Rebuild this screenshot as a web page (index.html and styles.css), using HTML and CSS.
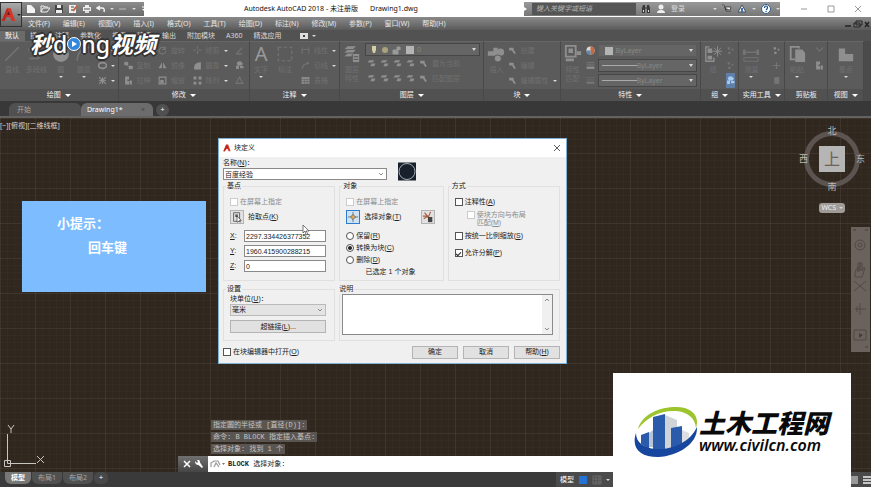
FILE: index.html
```html
<!DOCTYPE html>
<html lang="zh-CN">
<head>
  <meta charset="UTF-8">
  <meta name="viewport" content="width=device-width, initial-scale=1.0">
  <title>Autodesk AutoCAD 2018</title>
  <link rel="stylesheet" href="styles.css">
</head>
<body>
  <!-- shared icons -->
  <svg class="sprite" aria-hidden="true">
    <symbol id="i-line" viewBox="0 0 16 16"><path d="M2 14L14 2" stroke="currentColor" stroke-width="1.2"/></symbol>
    <symbol id="i-poly" viewBox="0 0 16 16"><path d="M1 4h8l5 4-4 4H2" fill="none" stroke="currentColor" stroke-width="1.4"/></symbol>
    <symbol id="i-circle" viewBox="0 0 16 16"><circle cx="8" cy="8" r="7" fill="currentColor"/></symbol>
    <symbol id="i-arc" viewBox="0 0 16 16"><path d="M2 14C2 7 6 3 13 2" fill="none" stroke="currentColor" stroke-width="1.3"/></symbol>
    <symbol id="i-rect" viewBox="0 0 16 16"><path d="M2 4h12v9H2z" fill="none" stroke="currentColor" stroke-width="2"/></symbol>
    <symbol id="i-ellipse" viewBox="0 0 16 16"><ellipse cx="8" cy="8" rx="7" ry="5" fill="none" stroke="currentColor" stroke-width="3"/></symbol>
    <symbol id="i-hatch" viewBox="0 0 16 16"><path d="M2 2l12 12M14 2L2 14M8 2v12M2 8h12" stroke="currentColor" stroke-width="2"/></symbol>
    <symbol id="i-move" viewBox="0 0 16 16"><path d="M8 1v14M1 8h14M5 4l3-3 3 3M5 12l3 3 3-3" fill="none" stroke="currentColor" stroke-width="2"/></symbol>
    <symbol id="i-copy" viewBox="0 0 16 16"><path d="M1 2h6v5H1zM9 9h6v5H9zM4 7l6 4" fill="currentColor" stroke="currentColor"/></symbol>
    <symbol id="i-stretch" viewBox="0 0 16 16"><path d="M2 1h7v5h-3v3h3v6H2zM10 8h4v7h-4z" fill="currentColor"/></symbol>
    <symbol id="i-rotate" viewBox="0 0 16 16"><path d="M13 5a6 6 0 1 0 1 4M13 1v5H8" fill="none" stroke="currentColor" stroke-width="2"/></symbol>
    <symbol id="i-mirror" viewBox="0 0 16 16"><path d="M7 2v11H1zM9 2v11h6z" fill="currentColor"/></symbol>
    <symbol id="i-scale" viewBox="0 0 16 16"><path d="M2 2h12v12H2z" fill="none" stroke="currentColor" stroke-width="2"/><path d="M4 7h6v6H4z" fill="currentColor"/></symbol>
    <symbol id="i-trim" viewBox="0 0 16 16"><path d="M1 7h5M9 7h6M8 1v4M8 9v5" stroke="currentColor" stroke-width="2"/></symbol>
    <symbol id="i-fillet" viewBox="0 0 16 16"><path d="M2 15V10Q3 2 14 2V15z" fill="currentColor"/></symbol>
    <symbol id="i-array" viewBox="0 0 16 16"><path d="M1 1h5v5H1zM10 1h5v5h-5zM1 10h5v5H1zM10 10h5v5h-5z" fill="currentColor"/></symbol>
    <symbol id="i-erase" viewBox="0 0 16 16"><path d="M3 13L13 3M2 14h11" stroke="currentColor" stroke-width="2"/></symbol>
    <symbol id="i-cubes" viewBox="0 0 16 16"><path d="M5 1h6l3 4-2 3H6L3 5zM2 8h5v6H2zM9 9h6v4H9z" fill="currentColor"/></symbol>
    <symbol id="i-tri" viewBox="0 0 16 16"><path d="M8 2l6 11H2z" fill="none" stroke="currentColor" stroke-width="2"/></symbol>
    <symbol id="i-dim" viewBox="0 0 16 16"><path d="M2 2v12M14 2v12M2 6h12" fill="none" stroke="currentColor" stroke-width="1.5"/></symbol>
    <symbol id="i-dash" viewBox="0 0 16 16"><path d="M2 2h12v12H2z" fill="none" stroke="currentColor" stroke-dasharray="3 2"/></symbol>
    <symbol id="i-leader" viewBox="0 0 16 16"><path d="M2 14C3 8 5 5 14 4" fill="none" stroke="currentColor" stroke-width="2"/><path d="M10 1l5 3-4 3z" fill="currentColor"/></symbol>
    <symbol id="i-table" viewBox="0 0 16 16"><path d="M1 2h14v12H1z" fill="currentColor"/><path d="M1 6h14M1 10h14M6 6v8M11 6v8" stroke="#5a5a5a"/></symbol>
    <symbol id="i-layers" viewBox="0 0 20 20"><path d="M5 1h10l-4 4H1zM5 5h10l-4 4H1zM5 9h7l-3 4H1z" fill="currentColor" stroke="#555" stroke-width=".6"/><path d="M11 10h7v9h-7z" fill="currentColor"/><path d="M12 13h5M12 16h5" stroke="#555"/></symbol>
    <symbol id="i-layer" viewBox="0 0 16 16"><path d="M4 2h9l-3 4H1z" fill="currentColor"/><path d="M8 8h7l-2 5H6z" fill="currentColor"/></symbol>
    <symbol id="i-insert" viewBox="0 0 20 20"><path d="M1 7h6V3h5v9H1z" fill="currentColor"/><circle cx="15" cy="8" r="4" fill="currentColor"/><circle cx="12" cy="15" r="4" fill="currentColor" stroke="#595959"/></symbol>
    <symbol id="i-edit" viewBox="0 0 16 16"><path d="M2 3h8v3l4 7-3 1-4-6H2z" fill="currentColor"/></symbol>
    <symbol id="i-match" viewBox="0 0 20 20"><path d="M2 1h11v12H2z" fill="none" stroke="currentColor" stroke-width="2"/><path d="M5 4h5v5H5zM2 15h9v3H2zM14 7h5v4h-5z" fill="currentColor"/></symbol>
    <symbol id="i-lines" viewBox="0 0 16 16"><path d="M1 3h14M1 7h14" stroke="currentColor"/><path d="M1 12h14" stroke="currentColor" stroke-width="4"/></symbol>
    <symbol id="i-group" viewBox="0 0 20 20"><path d="M6 2H2v16h9v-4" fill="none" stroke="currentColor" stroke-width="1.5"/><path d="M4 4h5v5H4zM4 12h5v4H4z" fill="currentColor"/><path d="M15 1v12M9 7h11M11 3l8 8M19 3l-8 8" stroke="currentColor"/></symbol>
    <symbol id="i-dots" viewBox="0 0 16 16"><path d="M3 2h4v4H3zM10 5h3v3h-3zM4 10h4v4H4z" fill="currentColor"/></symbol>
    <symbol id="i-measure" viewBox="0 0 20 20"><path d="M1 8h18" stroke="currentColor" stroke-width="1.500"/><path d="M1 5h3v6H1zM16 5h3v6h-3z" fill="currentColor"/><path d="M2 14h16v4H2z" fill="none" stroke="currentColor"/></symbol>
    <symbol id="i-plus" viewBox="0 0 16 16"><path d="M8 2v12M2 8h12" stroke="currentColor" stroke-width="2"/></symbol>
    <symbol id="i-calc" viewBox="0 0 16 16"><path d="M4 2h9v12H4z" fill="currentColor"/></symbol>
    <symbol id="i-paste" viewBox="0 0 20 20"><path d="M12 4V2H3v14h5" fill="none" stroke="currentColor" stroke-width="2"/><path d="M8 5h8l3 4v10H8z" fill="currentColor"/></symbol>
    <symbol id="i-cut" viewBox="0 0 16 16"><path d="M2 3l6 6 6-6" fill="none" stroke="currentColor" stroke-width="2"/></symbol>
    <symbol id="i-base" viewBox="0 0 20 20"><path d="M2 4h7v6h9v8H2z" fill="currentColor"/></symbol>
    <symbol id="i-acad" viewBox="0 0 20 20"><path d="M1 18L8 1h5l6 17h-5l-2-5H7l-2 5z" fill="#d3372a"/><path d="M8 10l2-5 2 5z" fill="#6f1712"/><path d="M1 18L8 1l2 4-5 13z" fill="#b92c22"/></symbol>
  </svg>

  <header class="titlebar">
    <div class="quick">
      <svg viewBox="0 0 10 10"><path d="M1 1h4l4 4v4H1z" fill="#f4f4f4"/></svg>
      <svg viewBox="0 0 10 10"><path d="M1 8V2h3l1 1h3M1 8l2-4h7L7 8z" fill="none" stroke="#eee"/></svg>
      <svg viewBox="0 0 10 10"><path d="M1 1h8v8H1z" fill="#444"/><path d="M3 1h4v3H3zM2 6h6v3H2z" fill="#eee"/></svg>
      <svg viewBox="0 0 10 10"><path d="M1 1h7v8H1z" fill="#eee"/><path d="M3 3h3M3 6h3" stroke="#444"/><path d="M5 7l4-5" stroke="#c76235" stroke-width="2"/></svg>
      <svg viewBox="0 0 10 10"><path d="M3 1h4v2h2v4H1V3h2z" fill="#eee"/><path d="M2 5h6" stroke="#555"/><path d="M3 7h4v2H3z" fill="#ddd"/></svg>
      <svg viewBox="0 0 10 10"><path d="M4 2L1 4l3 2M1 4h5q3 0 2 4" fill="none" stroke="#f4f4f4" stroke-width="1.4"/></svg>
      <i class="caret"></i>
      <svg viewBox="0 0 10 10"><path d="M1 5h7" stroke="#aaa" stroke-width="1.4"/></svg>
      <i class="caret"></i>
      <svg viewBox="0 0 10 10"><path d="M2 3h6" stroke="#fff"/><path d="M2 5h6L5 8z" fill="#fff"/></svg>
    </div>
    <h1 class="title"><span>Autodesk AutoCAD 2018 - 未注册版</span><span>Drawing1.dwg</span></h1>
    <div class="infocenter">
      <i class="arrow-right"></i>
      <input type="text" class="search" placeholder="键入关键字或短语" aria-label="搜索">
      <svg viewBox="0 0 10 10"><path d="M1 9V4l1-3h2v8zM6 9V1h2l1 3v5z" fill="#3a3a3a"/><path d="M4 4h2" stroke="#333"/><path d="M2 6h1v2H2zM7 6h1v2H7z" fill="#ddd"/></svg>
      <svg viewBox="0 0 10 10"><circle cx="5" cy="3" r="2.5" fill="#eee"/><path d="M1 9q0-3 4-3t4 3z" fill="#eee"/></svg>
      <a href="#" class="signin">登录</a>
      <i class="caret"></i>
      <svg viewBox="0 0 10 10"><path d="M0 1h2l2 6h5M3 3h6L8 6H4z" fill="#eee" stroke="#333" stroke-width=".8"/></svg>
      <svg viewBox="0 0 10 10"><path d="M5 1L1 8h8z" fill="#eee" stroke="#456" /><path d="M5 4v4" stroke="#3d74b0" stroke-width="2"/></svg>
      <i class="caret"></i>
      <svg class="help" viewBox="0 0 10 10"><circle cx="5" cy="5" r="4.5" fill="#fff" stroke="#2e6297"/><path d="M3.5 4q0-2 1.5-2t1.5 1.5T5 6M5 7v1" fill="none" stroke="#1c4c85" stroke-width="1.2"/></svg>
      <i class="caret"></i>
    </div>
    <div class="wincontrols">
      <svg viewBox="0 0 8 8"><path d="M1 4h6" stroke="#999"/></svg>
      <svg viewBox="0 0 8 8"><path d="M1 1h6v6H1z" fill="none" stroke="#999"/></svg>
      <svg viewBox="0 0 8 8"><path d="M1 1l6 6M7 1L1 7" stroke="#999"/></svg>
    </div>
  </header>

  <button class="appbutton" aria-label="应用程序菜单"><svg><use href="#i-acad"/></svg><i class="caret dark"></i></button>

  <nav class="menubar">
    <a href="#">文件(F)</a>
    <a href="#">编辑(E)</a>
    <a href="#">视图(V)</a>
    <a href="#">插入(I)</a>
    <a href="#">格式(O)</a>
    <a href="#">工具(T)</a>
    <a href="#">绘图(D)</a>
    <a href="#">标注(N)</a>
    <a href="#">修改(M)</a>
    <a href="#">参数(P)</a>
    <a href="#">窗口(W)</a>
    <a href="#">帮助(H)</a>
    <svg viewBox="0 0 26 8"><path d="M1 6h6" stroke="#222" stroke-width="1.5"/><path d="M12 1h6v4h-6zM10 3h6v4h-6z" fill="#777" stroke="#222"/><path d="M21 2l4 5M25 2l-4 5" stroke="#222" stroke-width="1.5"/></svg>
  </nav>

  <nav class="tabs">
    <a class="active" href="#">默认</a>
    <a href="#">插入</a>
    <a href="#">注释</a>
    <a href="#">参数化</a>
    <a href="#">视图</a>
    <a href="#">管理</a>
    <a href="#">输出</a>
    <a href="#">附加模块</a>
    <a href="#">A360</a>
    <a href="#">精选应用</a>
    <svg viewBox="0 0 8 6"><path d="M0 0h8v6H0z" fill="#ddd"/><path d="M3 2h2v2H3z" fill="#444"/></svg>
    <i class="caret"></i>
  </nav>

  <main class="ribbon">
    <section class="panel p-draw">
      <div class="tools">
        <button class="big"><svg><use href="#i-line"/></svg>直线</button>
        <button class="big"><svg><use href="#i-poly"/></svg>多段线</button>
        <button class="big"><svg class="lit"><use href="#i-circle"/></svg>圆<i class="caret"></i></button>
        <button class="big"><svg><use href="#i-arc"/></svg>圆弧<i class="caret"></i></button>
        <div class="col">
          <button aria-label="矩形"><svg><use href="#i-rect"/></svg><i class="caret"></i></button>
          <button aria-label="椭圆"><svg class="lit"><use href="#i-ellipse"/></svg><i class="caret"></i></button>
          <button aria-label="图案填充"><svg class="lit"><use href="#i-hatch"/></svg><i class="caret"></i></button>
        </div>
      </div>
      <h2>绘图<i class="caret wide"></i></h2>
    </section>
    <section class="panel p-modify">
      <div class="tools">
        <div class="col">
          <button><svg><use href="#i-move"/></svg>移动</button>
          <button><svg class="lit"><use href="#i-copy"/></svg>复制</button>
          <button><svg class="lit"><use href="#i-stretch"/></svg>拉伸</button>
        </div>
        <div class="col">
          <button><svg><use href="#i-rotate"/></svg>旋转</button>
          <button><svg class="lit"><use href="#i-mirror"/></svg>镜像</button>
          <button><svg class="lit"><use href="#i-scale"/></svg>缩放</button>
        </div>
        <div class="col">
          <button><svg><use href="#i-trim"/></svg>修剪<i class="caret"></i></button>
          <button><svg class="lit"><use href="#i-fillet"/></svg>圆角<i class="caret"></i></button>
          <button><svg class="lit"><use href="#i-array"/></svg>阵列<i class="caret"></i></button>
        </div>
        <div class="col">
          <button aria-label="删除"><svg><use href="#i-erase"/></svg></button>
          <button aria-label="分解"><svg class="lit"><use href="#i-cubes"/></svg></button>
          <button aria-label="偏移"><svg><use href="#i-tri"/></svg></button>
        </div>
      </div>
      <h2>修改<i class="caret wide"></i></h2>
    </section>
    <section class="panel p-note">
      <div class="tools">
        <button class="big"><span class="letter">A</span>文字<i class="caret"></i></button>
        <button class="big"><svg><use href="#i-dash"/></svg>标注</button>
        <div class="col">
          <button><svg><use href="#i-dim"/></svg>线性<i class="caret"></i></button>
          <button><svg><use href="#i-leader"/></svg>引线<i class="caret"></i></button>
          <button><svg class="lit"><use href="#i-table"/></svg>表格</button>
        </div>
      </div>
      <h2>注释<i class="caret wide"></i></h2>
    </section>
    <section class="panel p-layer">
      <div class="tools">
        <button class="big"><svg class="lit"><use href="#i-layers"/></svg>图层<br>特性</button>
        <div class="col grow">
          <div class="combo">
            <svg viewBox="0 0 34 10"><path d="M3 1h4v4l-1 3H4L3 5z" fill="#d5cfa4"/><circle cx="16" cy="5" r="3" fill="#aaa27b"/><path d="M24 5h5v4h-5zM28 5V2h3v3" fill="#999" stroke="#999"/></svg>
            <span class="swatch"></span>
            <select aria-label="图层"><option>0</option></select>
          </div>
          <div class="iconrow">
            <svg class="lit"><use href="#i-layer"/></svg>
            <svg class="lit"><use href="#i-layer"/></svg>
            <svg class="lit"><use href="#i-layer"/></svg>
            <svg class="lit"><use href="#i-layer"/></svg>
            <svg class="lit"><use href="#i-edit"/></svg>
            <span>置为当前</span>
          </div>
          <div class="iconrow">
            <svg class="lit"><use href="#i-layer"/></svg>
            <svg class="lit"><use href="#i-layer"/></svg>
            <svg class="lit"><use href="#i-layer"/></svg>
            <svg class="lit"><use href="#i-layer"/></svg>
            <svg class="lit"><use href="#i-edit"/></svg>
            <span>匹配图层</span>
          </div>
        </div>
      </div>
      <h2>图层<i class="caret wide"></i></h2>
    </section>
    <section class="panel p-block">
      <div class="tools">
        <button class="big"><svg class="lit"><use href="#i-insert"/></svg>插入</button>
        <div class="col">
          <button><svg class="lit"><use href="#i-edit"/></svg>创建</button>
          <button><svg class="lit"><use href="#i-edit"/></svg>编辑</button>
          <button><svg class="lit"><use href="#i-edit"/></svg>编辑属性<i class="caret"></i></button>
        </div>
      </div>
      <h2>块<i class="caret wide"></i></h2>
    </section>
    <section class="panel p-props">
      <div class="tools">
        <button class="big"><svg class="lit"><use href="#i-match"/></svg>特性<br>匹配</button>
        <div class="col grow">
          <div class="prop">
            <svg viewBox="0 0 10 10"><circle cx="5" cy="5" r="4.500" fill="#d8d8d8"/><path d="M5 .5A4.500 4.500 0 0 1 5 9.500z" fill="#c9683f"/><path d="M5 5v4.500A4.500 4.500 0 0 1 .5 5z" fill="#5c88ad"/></svg>
            <div class="combo flat"><span class="swatch"></span><select aria-label="颜色"><option>ByLayer</option></select></div>
          </div>
          <div class="prop">
            <svg class="lit"><use href="#i-lines"/></svg>
            <div class="combo"><span class="stroke"></span><select aria-label="线宽"><option>ByLayer</option></select></div>
          </div>
          <div class="prop">
            <svg><use href="#i-lines"/></svg>
            <div class="combo"><span class="stroke"></span><select aria-label="线型"><option>ByLayer</option></select></div>
          </div>
        </div>
      </div>
      <h2>特性<i class="caret wide"></i></h2>
    </section>
    <section class="panel p-group">
      <div class="tools">
        <button class="big"><svg class="lit"><use href="#i-group"/></svg>组</button>
        <div class="col">
          <button aria-label="解除编组"><svg><use href="#i-dots"/></svg></button>
          <button aria-label="组编辑"><svg><use href="#i-dots"/></svg></button>
          <button class="on" aria-label="启用组选择"><svg><use href="#i-cubes"/></svg></button>
        </div>
      </div>
      <h2>组<i class="caret wide"></i></h2>
    </section>
    <section class="panel p-utils">
      <div class="tools">
        <button class="big"><svg><use href="#i-measure"/></svg>测量<i class="caret"></i></button>
        <div class="col">
          <button aria-label="快速选择"><svg class="lit"><use href="#i-dots"/></svg></button>
          <button aria-label="点坐标"><svg><use href="#i-plus"/></svg></button>
          <button aria-label="计算器"><svg><use href="#i-calc"/></svg></button>
        </div>
      </div>
      <h2>实用工具<i class="caret wide"></i></h2>
    </section>
    <section class="panel p-clip">
      <div class="tools">
        <button class="big"><svg class="lit"><use href="#i-paste"/></svg>粘贴<i class="caret"></i></button>
        <div class="col">
          <button aria-label="剪切"><svg><use href="#i-cut"/></svg></button>
          <button aria-label="复制"><svg class="lit"><use href="#i-stretch"/></svg></button>
        </div>
      </div>
      <h2>剪贴板</h2>
    </section>
    <section class="panel p-view">
      <div class="tools">
        <button class="big"><svg class="lit"><use href="#i-base"/></svg>基点<i class="caret"></i></button>
      </div>
      <h2>视图<i class="caret wide"></i></h2>
    </section>
  </main>

  <nav class="filetabs">
    <a href="#">开始</a>
    <a class="active" href="#">Drawing1*<span>×</span></a>
    <button aria-label="新图形">+</button>
  </nav>

  <div class="canvas">
    <div class="viewlabel">[−][俯视][二维线框]</div>

    <aside class="tip">
      <p>小提示：</p>
      <p class="key">回车键</p>
    </aside>

    <svg class="ucs" viewBox="0 0 48 48"><path d="M7.500 40.500V11M7.500 40.500H36M4.500 37.500h6v6h-6z" fill="none" stroke="#c9c5c1"/><path d="M8 2l3 4 3-4M11 6v4M37 33l7 7M44 33l-7 7" fill="none" stroke="#c9c5c1"/></svg>

    <div class="viewcube">
      <span class="n">北</span>
      <span class="w">西</span>
      <button>上</button>
      <span class="e">东</span>
      <span class="s">南</span>
    </div>
    <button class="wcs">WCS<i class="caret"></i></button>

    <svg class="navbar" viewBox="0 0 19 125"><g fill="none" stroke="#514943"><circle cx="9" cy="18" r="5"/><circle cx="9" cy="18" r="2"/><path d="M4 50c0-7 2-10 3-10v5V36h2v8-8h2v8l2-4 1 1-3 9H6z"/><path d="M3 54l12 10M15 54L3 64M9 76v12M4 82h11M6 79v6"/><path d="M3 103h12v10H3z"/></g><path d="M8 106l4 2-4 3z" fill="#453d38"/><path d="M2 3h3M14 3h3M14 120h3" stroke="#493f39"/></svg>

    <div class="history">
      <p>指定圆的半径或 [直径(D)]:</p>
      <p>命令: B BLOCK 指定插入基点:</p>
      <p>选择对象: 找到 1 个</p>
    </div>

    <form class="dialog">
      <header>
        <svg><use href="#i-acad"/></svg>
        <h2>块定义</h2>
        <button type="button" aria-label="关闭"><svg viewBox="0 0 8 8"><path d="M1 1l6 6M7 1L1 7" stroke="#333" stroke-width=".8"/></svg></button>
      </header>
      <div class="body">
        <div class="namerow">
          <div class="name">
            <label for="name">名称(<u>N</u>)：</label>
            <select id="name"><option>百度经验</option></select>
          </div>
          <svg class="preview" viewBox="0 0 18 18"><path d="M0 0h18v18H0z" fill="#17202b"/><circle cx="9" cy="9" r="8" fill="none" stroke="#c8d0d8" stroke-width=".8"/></svg>
        </div>
        <div class="groups">
          <fieldset>
            <legend>基点</legend>
            <label class="row off"><input type="checkbox" disabled>在屏幕上指定</label>
            <div class="row pick">
              <button type="button" id="pick" class="tool"><svg viewBox="0 0 14 14"><path d="M3 2h7v10H3z" fill="none" stroke="#555"/><path d="M5 4h3v3H5z" fill="#555"/><path d="M7 6l5 5-2 0 1 2-2-1-2 1z" fill="#fff" stroke="#222" stroke-width=".7"/></svg></button>
              <label for="pick">拾取点(<u>K</u>)</label>
            </div>
            <div class="row coord"><label for="x"><u>X</u>:</label><input type="text" id="x" value="2297.334426377352"></div>
            <div class="row coord"><label for="y"><u>Y</u>:</label><input type="text" id="y" value="1960.415900288215"></div>
            <div class="row coord"><label for="z"><u>Z</u>:</label><input type="text" id="z" value="0"></div>
          </fieldset>
          <fieldset>
            <legend>对象</legend>
            <label class="row off"><input type="checkbox" disabled>在屏幕上指定</label>
            <div class="row pick">
              <button type="button" id="select" class="tool focus"><svg viewBox="0 0 14 14"><path d="M7 1v12M1 7h12" stroke="#6b6b6b"/><path d="M7 4l3 3-3 3-3-3z" fill="#dfa65c" stroke="#666"/></svg></button>
              <label for="select">选择对象(<u>T</u>)</label>
              <button type="button" class="tool last" aria-label="快速选择"><svg viewBox="0 0 14 14"><path d="M1 6h7M3 2l5 6M10 1L7 8M2 9l5-3" stroke="#a85c3c" stroke-width="1.300"/><path d="M7 7h5v6H7z" fill="#444"/></svg></button>
            </div>
            <label class="row"><input type="radio" name="keep"><span>保留(<u>R</u>)</span></label>
            <label class="row"><input type="radio" name="keep" checked><span>转换为块(<u>C</u>)</span></label>
            <label class="row"><input type="radio" name="keep"><span>删除(<u>D</u>)</span></label>
            <p class="row selected">已选定 1 个对象</p>
          </fieldset>
          <fieldset>
            <legend>方式</legend>
            <label class="row"><input type="checkbox"><span>注释性(<u>A</u>)</span></label>
            <label class="row off sub"><input type="checkbox" disabled><span>使块方向与布局<br>匹配(<u>M</u>)</span></label>
            <label class="row"><input type="checkbox"><span>按统一比例缩放(<u>S</u>)</span></label>
            <label class="row explode"><input type="checkbox" checked><span>允许分解(<u>P</u>)</span></label>
          </fieldset>
          <fieldset class="settings">
            <legend>设置</legend>
            <label for="unit">块单位(<u>U</u>)：</label>
            <select id="unit"><option>毫米</option></select>
            <button type="button">超链接(<u>L</u>)...</button>
          </fieldset>
          <fieldset class="desc">
            <legend>说明</legend>
            <div class="memo">
              <textarea aria-label="说明"></textarea>
              <div class="scroll">
                <svg viewBox="0 0 6 4"><path d="M1 3l2-2 2 2" fill="none" stroke="#888"/></svg>
                <svg viewBox="0 0 6 4"><path d="M1 1l2 2 2-2" fill="none" stroke="#888"/></svg>
              </div>
            </div>
          </fieldset>
        </div>
        <footer>
          <label class="row"><input type="checkbox"><span>在块编辑器中打开(<u>O</u>)</span></label>
          <button type="submit">确定</button>
          <button type="button">取消</button>
          <button type="button">帮助(<u>H</u>)</button>
        </footer>
      </div>
    </form>

    <svg class="cursor" viewBox="0 0 8 12"><path d="M1 1v8l2-2 1 4 2-1-2-3h3z" fill="#fff" stroke="#444" stroke-width=".7"/></svg>
  </div>

  <div class="command">
    <div class="grip">
      <svg viewBox="0 0 8 8"><path d="M1 1l6 6M7 1L1 7" stroke="#fff" stroke-width="1.500"/></svg>
      <svg viewBox="0 0 8 8"><path d="M0 1l2 2 1-1-1-2q3-1 3 2.500L8 7 7 8 3.500 5Q0 5 0 1z" fill="#fff"/></svg>
    </div>
    <svg class="prompt" viewBox="0 0 16 10"><path d="M1 8V4l3-2h4l2 4M4 8l2-4 3 4" fill="none" stroke="#999" stroke-width="1.200"/><path d="M12 4h3l-1.500 2z" fill="#777"/></svg>
    <label for="cmd"><b>BLOCK</b> 选择对象:</label>
    <input type="text" id="cmd">
  </div>

  <footer class="status">
    <nav class="layouts">
      <a class="active" href="#">模型</a>
      <a href="#">布局1</a>
      <a href="#">布局2</a>
      <button aria-label="新建布局">+</button>
    </nav>
    <div class="toggles">
      <button>模型</button>
      <svg viewBox="0 0 10 10"><path d="M1 1h8v8H1z" fill="#2372d4"/></svg>
      <svg viewBox="0 0 10 10"><path d="M1 1h8v8H1zM4 1v8M7 1v8M1 4h8M1 7h8" fill="none" stroke="#777" stroke-width=".7"/></svg>
      <i class="caret"></i>
    </div>
    <div class="custom">
      <svg viewBox="0 0 10 10"><path d="M0 1h7v8H0z" fill="#999"/></svg>
      <svg viewBox="0 0 10 10"><path d="M1 2h8M1 5h8M1 8h8" stroke="#eee" stroke-width="1.300"/></svg>
    </div>
  </footer>

  <div class="watermark">秒<span>d</span><svg viewBox="0 0 14 14"><circle cx="7" cy="7" r="6.500" fill="#2f87e0" stroke="#fff" stroke-width="1"/><path d="M5 4l5 3-5 3z" fill="#fff"/></svg><span>ng</span>视频</div>

  <div class="sitecard">
    <svg viewBox="0 0 64 52">
      <path d="M31 9l12 5v29H31z" fill="#d0d3d7"/>
      <path d="M48 24l7 3v11l-7 4z" fill="#dcdee1"/>
      <path d="M15 27l4-3v17h-4z" fill="#b8c4da"/>
      <path d="M19 11l12-3v35H19z" fill="#2b5cab"/>
      <path d="M7 29l8-3v17l-8-5z" fill="#2b5cab"/>
      <path d="M37 22l11-2v21l-11 2z" fill="#2b5cab"/>
      <path d="M4 23C8 8 26 1 42 1 58 1 66 10 62 22 61 12 54 6 42 5 27 4 13 11 4 23z" fill="#9cc42c"/>
      <path d="M2 27C-3 42 6 51 24 51 45 50 64 37 63 21 56 36 39 44 22 43 9 42 2 36 2 27z" fill="#17469e"/>
    </svg>
    <div class="sitename">
      <strong>土木工程网</strong>
      <a href="#">www.civilcn.com</a>
    </div>
  </div>
</body>
</html>
```
FILE: styles.css
```css
* {
  box-sizing: border-box;
}

body {
  margin: 0;
  min-height: 100vh;
  display: flex;
  flex-direction: column;
  position: relative;
  overflow: hidden;
  background-color: #3a3a3a;
  color: #d8d8d8;
  font-family: "Noto Sans", "Noto Sans CJK SC", sans-serif;
  font-size: 7px;
  line-height: 10px;
}

h1, h2, p {
  margin: 0;
  font-size: 7px;
  font-weight: normal;
}

a {
  color: inherit;
  text-decoration: none;
}

button, input, select, textarea {
  font: inherit;
  color: inherit;
  margin: 0;
  padding: 0;
  border: none;
  border-radius: 0;
  background: none;
}

svg {
  display: block;
  flex: none;
}

.sprite {
  position: absolute;
  width: 0;
  height: 0;
}

.caret {
  flex: none;
  display: inline-block;
  border: 2px solid transparent;
  border-top-color: #d8d8d8;
  border-bottom: none;
}

.caret.wide {
  border-width: 3px;
  border-bottom: none;
  border-top-color: #fff;
}

.caret.dark {
  border-top-color: #222;
}

/* title bar */
.titlebar {
  display: flex;
  align-items: center;
  height: 17px;
  padding-left: 22px;
  background-color: #fff;
}

.titlebar svg {
  width: 10px;
  height: 10px;
}

.quick {
  display: flex;
  align-items: center;
  gap: 4px;
  width: 122px;
  height: 14px;
  padding-left: 4px;
  background: linear-gradient(#8c8c8c, #6b6b6b);
}

.title {
  flex: 1;
  display: flex;
  gap: 12px;
  padding-left: 100px;
  color: #111;
}

.infocenter {
  display: flex;
  align-items: center;
  gap: 5px;
  width: 256px;
  height: 14px;
  background: linear-gradient(#999, #777);
}

.arrow-right {
  border: 2px solid transparent;
  border-left: 3px solid #fff;
  border-right: none;
}

.search {
  width: 104px;
  height: 12px;
  padding-left: 4px;
  background-color: #555;
}

.search::placeholder {
  color: #b5b5b5;
  font-style: italic;
}

.signin {
  flex: 1;
}

.wincontrols {
  display: flex;
  justify-content: space-around;
  width: 81px;
  margin-left: 10px;
}

.wincontrols svg {
  width: 8px;
  height: 8px;
}

.appbutton {
  position: absolute;
  left: 0;
  top: 2px;
  width: 22px;
  height: 25px;
  display: flex;
  align-items: center;
  gap: 1px;
  border: 1px solid #333;
  background: linear-gradient(#aaa, #666);
}

.appbutton svg {
  width: 15px;
  height: 18px;
}

.menubar {
  display: flex;
  align-items: center;
  gap: 13px;
  height: 13px;
  padding: 0 1px 0 28px;
  background: linear-gradient(#8a8a8a, #5a5a5a);
  color: #e6e6e6;
}

.menubar svg {
  width: 26px;
  height: 8px;
  margin-left: auto;
}

.tabs {
  display: flex;
  align-items: center;
  height: 11px;
  background-color: #525252;
}

.tabs a {
  padding: 0 6px 0 5px;
}

.tabs a.active {
  background-color: #6b6b6b;
  color: #fff;
}

.tabs svg {
  width: 8px;
  height: 6px;
  margin: 0 4px 0 12px;
}

/* ribbon */
.ribbon {
  display: flex;
  height: 60px;
  padding-right: 7px;
  background-color: #4b4b4b;
}

.panel {
  flex: 1 1 0;
  min-width: 0;
  display: flex;
  flex-direction: column;
  border-right: 1px solid #484848;
  border-top: 1px solid #666;
  background-color: #5b5b5b;
}

.p-draw { flex-grow: 119; }
.p-modify { flex-grow: 132; }
.p-note { flex-grow: 90; }
.p-layer { flex-grow: 145; }
.p-block { flex-grow: 76; }
.p-props { flex-grow: 141; }
.p-group { flex-grow: 38; }
.p-utils { flex-grow: 45; }
.p-clip { flex-grow: 43; }
.p-view { flex-grow: 35; }

.tools {
  flex: 1;
  display: flex;
  justify-content: space-between;
  padding: 1px 3px;
  color: #707070;
}

.p-modify .tools {
  padding: 1px 5px;
}

.p-view .tools {
  justify-content: center;
}

.panel h2 {
  display: flex;
  justify-content: center;
  align-items: center;
  gap: 4px;
  height: 12px;
  background-color: #515151;
  color: #f0f0f0;
  white-space: nowrap;
}

.tools button {
  display: flex;
  align-items: center;
  gap: 4px;
  white-space: nowrap;
}

.tools svg {
  width: 9px;
  height: 9px;
  color: #757575;
}

.tools svg.lit {
  color: #8f8f8f;
}

.tools .big {
  flex-direction: column;
  gap: 2px;
  min-width: 16px;
  padding-top: 2px;
  line-height: 9px;
}

.tools .big svg {
  width: 18px;
  height: 18px;
}

.letter {
  font-size: 20px;
  line-height: 18px;
  color: #9a9a9a;
}

.col {
  display: flex;
  flex-direction: column;
}

.col.grow {
  flex: 1;
  padding-left: 4px;
}

.col > * {
  height: 15px;
}

.tools .on {
  background-color: #5f7fa8;
}

.tools .on svg {
  color: #a9cbf0;
}

.tools .col .combo {
  display: flex;
  align-items: center;
  height: 13px;
  padding: 0 3px;
  border: 1px solid #464646;
  background-color: #656565;
}

.tools .combo > svg {
  width: 34px;
  height: 10px;
}

.tools .col .flat {
  border-color: #5b5b5b;
}

.swatch {
  width: 8px;
  height: 8px;
  margin: 0 3px;
  background-color: #b4b4b4;
}

.combo select {
  flex: 1;
  appearance: none;
  color: #888;
}

.combo::after {
  content: "";
  border: 2px solid transparent;
  border-top: 3px solid #d8d8d8;
  border-bottom: none;
}

.iconrow {
  display: flex;
  align-items: center;
  gap: 4px;
  padding-left: 2px;
}

.prop {
  display: flex;
  align-items: center;
  gap: 3px;
}

.prop .combo {
  flex: 1;
}

.stroke {
  width: 35px;
  height: 1px;
  background-color: #aaa;
}

/* drawing file tabs */
.filetabs {
  display: flex;
  align-items: flex-end;
  height: 17px;
  padding-left: 9px;
  border-bottom: 2px solid #626262;
  background-color: #383838;
}

.filetabs a {
  width: 72px;
  height: 13px;
  padding: 2px 8px;
  border-radius: 6px 6px 0 0;
  background-color: #505050;
  color: #a8a8a8;
}

.filetabs .active {
  display: flex;
  justify-content: space-between;
  padding-left: 6px;
  background-color: #6c6c6c;
  color: #fff;
}

.filetabs span {
  color: #444;
}

.filetabs button {
  width: 13px;
  height: 12px;
  margin-left: 3px;
  border-radius: 6px;
  background-color: #505050;
  font-weight: bold;
}

/* model space */
.canvas {
  flex: 1;
  position: relative;
  min-height: 354px;
  background-color: #30271f;
  background-image:
    repeating-linear-gradient(90deg, rgba(255, 235, 215, 0.05) 0 1px, transparent 1px 35px),
    repeating-linear-gradient(rgba(255, 235, 215, 0.05) 0 1px, transparent 1px 35px),
    repeating-linear-gradient(90deg, rgba(255, 235, 215, 0.02) 0 1px, transparent 1px 7px),
    repeating-linear-gradient(rgba(255, 235, 215, 0.02) 0 1px, transparent 1px 7px);
}

.viewlabel {
  padding-top: 3px;
}

.tip {
  position: absolute;
  left: 22px;
  top: 83px;
  width: 184px;
  height: 91px;
  padding: 13px 35px;
  background-color: #7dbdff;
  color: #fff;
}

.tip p {
  font-size: 13px;
  font-weight: bold;
  line-height: 19px;
}

.tip .key {
  padding: 5px 0 0 31px;
}

.ucs {
  position: absolute;
  left: 0;
  bottom: 1px;
  width: 48px;
  height: 48px;
}

.viewcube {
  position: absolute;
  right: 6px;
  top: 8px;
  width: 66px;
  height: 66px;
  display: grid;
  grid-template-columns: 1fr 26px 1fr;
  grid-template-rows: 1fr 26px 1fr;
  place-items: center;
  font-size: 9px;
  color: #bdb8b3;
}

.viewcube::before {
  content: "";
  position: absolute;
  left: 5px;
  top: 5px;
  width: 46px;
  height: 46px;
  border: 5px solid #5b5450;
  border-radius: 50%;
}

.viewcube > * {
  position: relative;
}

.viewcube .n,
.viewcube .s {
  grid-column: 1 / 4;
}

.viewcube .n { align-self: start; }
.viewcube .s { align-self: end; }
.viewcube .w { justify-self: start; }
.viewcube .e { justify-self: end; }

.viewcube button {
  width: 26px;
  height: 26px;
  background-color: #b5b5b5;
  color: #6e6255;
  font-size: 16px;
  line-height: 24px;
}

.wcs {
  position: absolute;
  right: 26px;
  top: 85px;
  width: 26px;
  height: 10px;
  display: flex;
  align-items: center;
  justify-content: space-evenly;
  border-radius: 3px;
  background-color: #a09b97;
  color: #eee;
}

.navbar {
  position: absolute;
  right: 1px;
  top: 109px;
  width: 19px;
  height: 125px;
  background-color: #6a625d;
}

.history {
  position: absolute;
  left: 211px;
  bottom: 18px;
  display: flex;
  flex-direction: column;
  align-items: flex-start;
  gap: 2px;
  font-family: "Liberation Mono", "Noto Sans CJK SC", monospace;
  color: #c4c4c4;
}

.history p {
  padding: 0 2px;
  background-color: #5a5550;
}

.cursor {
  position: absolute;
  left: 302px;
  top: 106px;
  width: 8px;
  height: 12px;
}

/* block definition dialog */
.dialog {
  position: absolute;
  left: 218px;
  top: 20px;
  width: 349px;
  border: 1px solid #7fb2d6;
  background-color: #f0f0f0;
  color: #222;
  font-family: "Liberation Sans", "Noto Sans CJK SC", sans-serif;
}

.dialog header {
  display: flex;
  align-items: center;
  gap: 3px;
  height: 18px;
  padding: 0 5px 0 4px;
  background-color: #fff;
}

.dialog header svg {
  width: 8px;
  height: 8px;
}

.dialog header h2 {
  flex: 1;
}

.dialog .body {
  padding: 0 6px 0 4px;
}

.dialog select {
  display: block;
  width: 100%;
  height: 12px;
  padding-left: 1px;
  appearance: none;
  border: 1px solid #8a8a8a;
  background: #fff url("data:image/svg+xml,%3Csvg xmlns='http://www.w3.org/2000/svg' viewBox='0 0 6 4'%3E%3Cpath d='M1 1l2 2 2-2' fill='none' stroke='%23777' stroke-width='.8'/%3E%3C/svg%3E") no-repeat right 2px center / 6px 4px;
}

.dialog .body button {
  border: 1px solid #b4b4b4;
  background-color: #e1e1e1;
}

.namerow {
  display: flex;
  gap: 11px;
  height: 24px;
}

.name {
  width: 164px;
  line-height: 12px;
}

.name label {
  display: block;
  height: 11px;
}

.preview {
  width: 18px;
  height: 19px;
  margin-top: 5px;
}

.groups {
  display: grid;
  grid-template-columns: 112fr 104fr 112fr;
  gap: 3px 4px;
}

.dialog fieldset {
  min-width: 0;
  min-height: 100px;
  margin: 0;
  padding: 5px 8px 0 6px;
  border: 1px solid #e0e0e0;
}

.dialog legend {
  padding: 0 1px;
  margin-left: -4px;
  line-height: 10px;
}

.row {
  display: flex;
  align-items: center;
  gap: 2px;
  height: 12px;
  white-space: nowrap;
}

.off {
  color: #8a8a8a;
}

.dialog input[type="checkbox"],
.dialog input[type="radio"] {
  flex: none;
  appearance: none;
  display: grid;
  place-items: center;
  width: 8px;
  height: 8px;
  border: 1px solid #555;
  background-color: #fff;
}

.dialog input[type="radio"] {
  border-radius: 50%;
}

.dialog input[type="radio"]:checked::before {
  content: "";
  width: 4px;
  height: 4px;
  border-radius: 50%;
  background-color: #222;
}

.dialog input[type="checkbox"]:checked::before {
  content: "";
  width: 4px;
  height: 2px;
  border: solid #222;
  border-width: 0 0 1px 1px;
  transform: rotate(-45deg);
}

.dialog input:disabled {
  border-color: #ccc;
}

.pick {
  height: 14px;
  margin: 2px 0 6px;
  gap: 4px;
}

.tool {
  width: 14px;
  height: 14px;
}

.tool svg {
  width: 12px;
  height: 12px;
}

.dialog .body .focus {
  border-color: #2c7cd0;
  background-color: #cfe3f6;
}

.tool.last {
  margin-left: auto;
}

.coord {
  margin-bottom: 3px;
}

.coord label {
  width: 12px;
}

.coord input {
  flex: 1;
  min-width: 0;
  height: 12px;
  padding-left: 1px;
  border: 1px solid #8a8a8a;
  background-color: #fff;
}

.selected {
  justify-content: center;
}

.sub {
  height: 16px;
  margin: 3px 0;
  padding-left: 12px;
  align-items: flex-start;
  line-height: 8px;
}

.explode {
  margin-top: 5px;
}

.dialog .settings,
.dialog .desc {
  min-height: 57px;
  padding-top: 0;
}

.settings label {
  display: block;
  line-height: 10px;
}

.dialog .settings select {
  border-color: #bbb;
  background-color: #e4e4e4;
}

.settings button {
  display: block;
  width: 100%;
  height: 13px;
  margin-top: 4px;
}

.dialog .desc {
  grid-column: 2 / 4;
  padding: 0 6px 0 2px;
}

.memo {
  display: flex;
  height: 41px;
  border: 1px solid #8a8a8a;
  background-color: #fff;
}

.memo textarea {
  flex: 1;
  resize: none;
}

.scroll {
  display: flex;
  flex-direction: column;
  justify-content: space-between;
  align-items: center;
  width: 10px;
  padding: 3px 0;
  background-color: #f0f0f0;
}

.scroll svg {
  width: 6px;
  height: 4px;
}

.dialog footer {
  display: flex;
  align-items: center;
  gap: 5px;
  height: 22px;
}

.dialog footer .row {
  flex: 1;
}

.dialog footer button {
  width: 46px;
  height: 13px;
  line-height: 10px;
}

/* command line */
.command {
  position: relative;
  display: flex;
  align-items: center;
  height: 16px;
  margin: -16px 40px 0 178px;
  background-color: #fff;
  color: #222;
  font-family: "Liberation Mono", "Noto Sans CJK SC", monospace;
}

.grip {
  display: flex;
  align-items: center;
  justify-content: space-evenly;
  width: 30px;
  height: 16px;
  background: linear-gradient(#707070, #454545);
}

.grip svg {
  width: 8px;
  height: 8px;
}

.prompt {
  width: 16px;
  height: 10px;
  margin: 0 2px;
}

.command input {
  flex: 1;
}

/* status bar */
.status {
  display: flex;
  align-items: center;
  height: 15px;
  background-color: #3a3a3a;
}

.layouts {
  flex: 1;
  display: flex;
  align-items: flex-start;
  height: 15px;
  gap: 1px;
  padding-left: 5px;
}

.layouts a {
  width: 30px;
  height: 12px;
  border-radius: 0 0 6px 6px;
  background-color: #505050;
  color: #a8a8a8;
  line-height: 12px;
  text-align: center;
}

.layouts .active {
  width: 26px;
  background-color: #777;
  color: #fff;
  font-weight: bold;
}

.layouts button {
  width: 14px;
  height: 12px;
  border-radius: 5px;
  background-color: #484848;
  font-weight: bold;
}

.toggles {
  display: flex;
  align-items: center;
  gap: 4px;
  width: 295px;
  height: 15px;
  padding-left: 4px;
  background-color: #4a4a4a;
}

.toggles button {
  color: #fff;
}

.status svg {
  width: 10px;
  height: 10px;
}

.custom {
  display: flex;
  gap: 1px;
  width: 20px;
  height: 15px;
  align-items: center;
  background-color: #4a4a4a;
}

/* overlays */
.watermark {
  position: absolute;
  left: 30px;
  top: 29px;
  display: flex;
  align-items: center;
  color: #fff;
  font-size: 23px;
  font-style: italic;
  font-weight: bold;
  line-height: 30px;
  text-shadow: -2px 0 #333, 2px 0 #333, 0 -2px #333, 0 2px #333, -1px -1px #333, 1px 1px #333, -1px 1px #333, 1px -1px #333;
}

.watermark span {
  font-style: normal;
  font-weight: 500;
}

.watermark svg {
  width: 14px;
  height: 14px;
}

.sitecard {
  position: absolute;
  right: 20px;
  bottom: 0;
  z-index: 2;
  display: flex;
  align-items: center;
  gap: 1px;
  width: 238px;
  height: 114px;
  padding: 4px 0 0 21px;
  background-color: #fff;
  color: #0a0a0a;
}

.sitecard svg {
  width: 64px;
  height: 52px;
}

.sitename {
  display: flex;
  flex-direction: column;
}

.sitename strong {
  font-size: 26px;
  font-weight: 900;
  font-style: italic;
  line-height: 26px;
}

.sitename a {
  font-family: "Noto Sans", sans-serif;
  font-size: 16px;
  font-style: italic;
  font-weight: 600;
  line-height: 18px;
}
```
